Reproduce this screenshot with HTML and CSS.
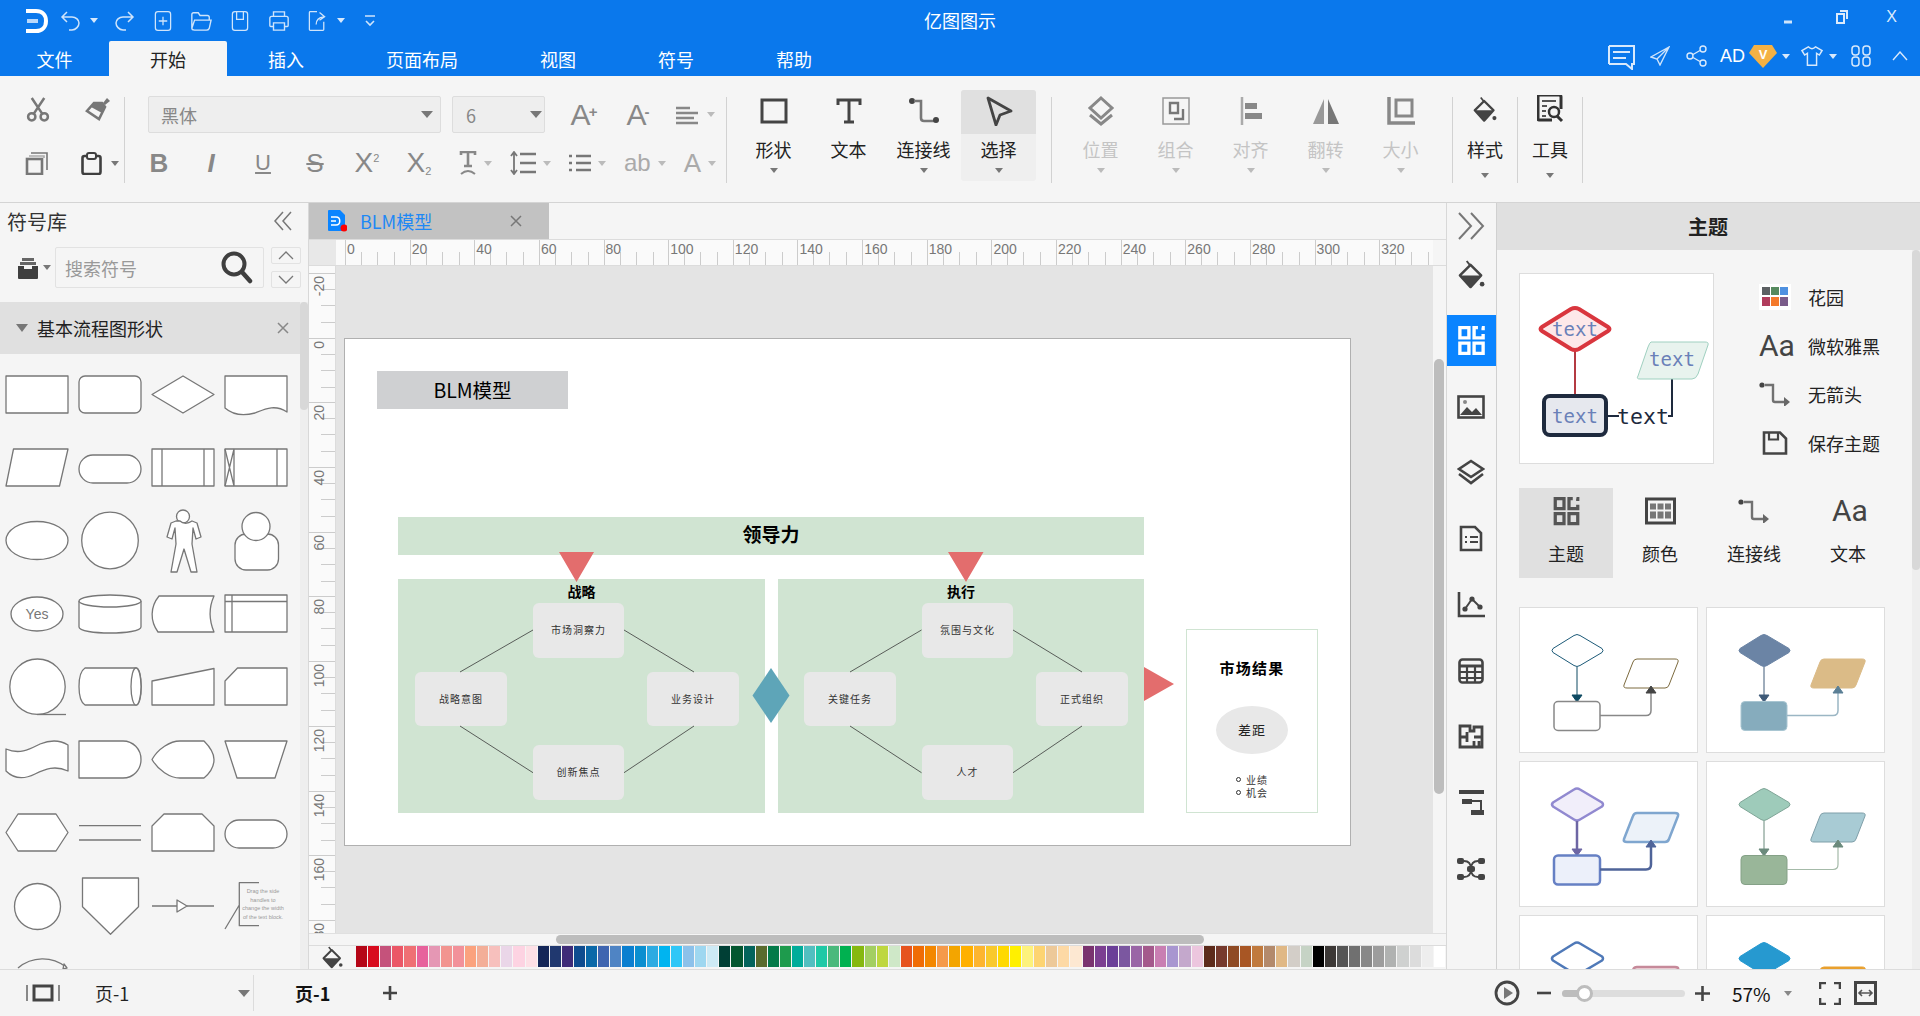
FILE: index.html
```html
<!DOCTYPE html>
<html lang="zh-CN">
<head>
	<meta charset="utf-8" />
	<title>亿图图示</title>
	<link rel="stylesheet" href="styles.css">
</head>
<body>
	<svg class="defs" width="0" height="0">
		<symbol id="i-theme" viewBox="0 0 24 24">
			<path d="M3 2h7v8H3zM3 14h7v8H3zM14 14h7v8h-7zM17 2h-3v8h7V7M20 2h1v2" fill="none" stroke="currentColor" stroke-width="2.6"/>
		</symbol>
		<symbol id="i-conn" viewBox="0 0 32 24">
			<circle cx="3" cy="3" r="2.6" fill="currentColor"/>
			<path d="M6 3h8v15q0 2 2 2h9" fill="none" stroke="currentColor" stroke-width="2.4" opacity=".75"/>
			<path d="M25 15l6 5-6 5z" fill="currentColor" opacity=".8"/>
		</symbol>
		<symbol id="i-bucket" viewBox="0 0 28 30">
			<path d="M9 1l4 5" stroke="currentColor" stroke-width="2" fill="none"/>
			<path d="M13 5l11 11-11 12L2 16z" fill="none" stroke="currentColor" stroke-width="2.6" stroke-linejoin="round"/>
			<path d="M2 16h22L13 28z" fill="currentColor"/>
			<circle cx="25" cy="25" r="2.4" fill="currentColor"/>
		</symbol>
		<symbol id="sample" viewBox="0 0 179 146">
			<path class="s-dia" d="M55 28.500q3-2 6 0l22 13q2 2 0 4L61 58.500q-3 2-6 0L34 45.500q-2-2 0-4z"/>
			<path class="s-line" d="M58 60v30"/>
			<path class="s-head" d="M53 88h10l-5 7z"/>
			<rect class="s-box" x="35" y="94.500" width="46" height="29" rx="4"/>
			<path class="s-para" d="M118 52h38q4 0 3 3l-9 23q-1 3-4 3h-38q-4 0-3-3l9-23q1-3 4-3z"/>
			<path class="s-conn" d="M81 108.500h46q5 0 5-5V85"/>
			<path class="s-chead" d="M127 86l5-7 5 7z"/>
		</symbol>
	</svg>

	<header class="titlebar">
		<div class="quick">
			<span class="qa-logo">
				<svg width="23" height="26" viewBox="0 0 23 26"><path d="M1 3h10c6 0 10 4 10 10s-4 10-10 10H1" fill="none" stroke="#fff" stroke-width="4"/><path d="M2 13h11" stroke="#b9d8fb" stroke-width="4"/></svg>
			</span>
			<span class="qa-undo">
				<svg class="qa-svg" viewBox="0 0 22 22"><path d="M7 2L2 7l5 5M2 7h10c4 0 7 3 7 6s-3 7-7 7H9" /></svg>
				<i class="caret caret-white"></i>
			</span>
			<span class="qa-btn"><svg class="qa-svg" viewBox="0 0 22 22"><path d="M15 2l5 5-5 5M20 7H10c-4 0-7 3-7 6s3 7 7 7h3"/></svg></span>
			<span class="qa-btn"><svg class="qa-svg" viewBox="0 0 22 26"><rect x="2" y="2" width="18" height="22" rx="3"/><path d="M11 8v10M6 13h10"/></svg></span>
			<span class="qa-btn"><svg class="qa-svg" viewBox="0 0 24 24"><path d="M2 20V5q0-2 2-2h5l2 3h8q2 0 2 2v3M2 20q0 2 3 2h13q2 0 3-2l2-9H5z"/></svg></span>
			<span class="qa-btn"><svg class="qa-svg" viewBox="0 0 22 26"><rect x="2" y="2" width="18" height="22" rx="3"/><path d="M7 2v9h8V2"/></svg></span>
			<span class="qa-btn"><svg class="qa-svg" viewBox="0 0 24 24"><path d="M6 7V2h12v5M6 18H3q-1 0-1-1V9q0-2 2-2h16q2 0 2 2v8q0 1-1 1h-3M6 14h12v8H6z"/></svg></span>
			<span class="qa-btn"><svg class="qa-svg" viewBox="0 0 22 26"><path d="M11 2H3q-1 0-1 1v20q0 1 1 1h15q1 0 1-1v-9M10 17q0-8 9-9M14 3l6 5-6 4"/></svg></span>
			<i class="caret caret-white"></i>
			<span class="qa-more"><svg width="12" height="14" viewBox="0 0 12 14"><path d="M1 2h10M2 7l4 4 4-4" fill="none" stroke="#cfe4fb" stroke-width="1.6"/></svg></span>
		</div>
		<div class="app-title">亿图图示</div>
		<div class="winctl">
			<svg class="win-min" width="10" height="8" viewBox="0 0 10 8"><path d="M1 5h8" stroke="#cfe4fb" stroke-width="3"/></svg>
			<svg class="win-max" width="12" height="14" viewBox="0 0 12 14"><path d="M4 1h7v8M1 4h7v9H1z" fill="none" stroke="#dcebfc" stroke-width="2"/></svg>
			<span class="win-close">X</span>
		</div>
	</header>

	<nav class="menubar">
		<a class="tab tab-first">文件</a>
		<a class="tab tab-on">开始</a>
		<a class="tab">插入</a>
		<a class="tab tab-wide">页面布局</a>
		<a class="tab">视图</a>
		<a class="tab">符号</a>
		<a class="tab">帮助</a>
		<div class="menu-right">
			<svg width="30" height="27" viewBox="0 0 30 27"><path d="M2 3h25v18h-2v5l-6-5H2M2 3v18M6 9h17M6 15h13" fill="none" stroke="#d8e9fc" stroke-width="2"/></svg>
			<svg class="mr-send" width="20" height="20" viewBox="0 0 20 20"><path d="M19 1L1 11l6 2 3 6zM19 1L7 13" fill="none" stroke="#cfe4fb" stroke-width="1.4"/></svg>
			<svg class="mr-share" width="21" height="22" viewBox="0 0 21 22"><circle cx="4" cy="11" r="3"/><circle cx="17" cy="4" r="3"/><circle cx="17" cy="18" r="3"/><path d="M7 9.500l7-4M7 12.500l7 4"/></svg>
			<span class="mr-ad">AD</span>
			<svg class="mr-vip" width="28" height="24" viewBox="0 0 28 24"><path d="M5 1h18l5 8-14 15L0 9z" fill="#f4b144"/><text x="14" y="15" text-anchor="middle" class="vip-v">V</text></svg>
			<i class="caret caret-white mr-caret"></i>
			<svg class="mr-shirt" width="22" height="22" viewBox="0 0 24 22"><path d="M8 1L1 5l3 5 3-2v13h10V8l3 2 3-5-7-4q-4 4-8 0z" fill="none" stroke="#d8e9fc" stroke-width="1.6"/></svg>
			<i class="caret caret-white mr-caret2"></i>
			<svg class="mr-grid" width="20" height="22" viewBox="0 0 20 22"><g fill="none" stroke="#d8e9fc" stroke-width="1.5"><rect x="1" y="1" width="7" height="9" rx="3"/><rect x="12" y="1" width="7" height="9" rx="3"/><rect x="1" y="12" width="7" height="9" rx="3"/><rect x="12" y="12" width="7" height="9" rx="3"/></g></svg>
			<svg class="mr-up" width="16" height="10" viewBox="0 0 16 10"><path d="M1 9l7-8 7 8" fill="none" stroke="#d8e9fc" stroke-width="1.4"/></svg>
		</div>
	</nav>

	<section class="ribbon">
		<div class="rb-clip">
			<span class="rb-icon"><svg width="26" height="25" viewBox="0 0 24 24"><g fill="none" stroke="#777" stroke-width="2.4"><circle cx="6" cy="19" r="3.500"/><circle cx="18" cy="19" r="3.500"/><path d="M8 16L18 1M16 16L6 1"/></g></svg></span>
			<span class="rb-icon rb-brush"><svg width="26" height="24" viewBox="0 0 26 24"><path d="M18 6l4-5 3 3-5 4z" fill="#777"/><path d="M9 6l8 0 3 4-6 12-12-8z" fill="none" stroke="#777" stroke-width="2.600"/><path d="M9 6l8 0 3 4-3 6-11-6z" fill="#777"/></svg></span>
			<span class="rb-icon"><svg width="23" height="23" viewBox="0 0 23 23"><path d="M6 1h16v17" fill="none" stroke="#777" stroke-width="1.6"/><path d="M4 4h15v2" fill="none" stroke="#aaa" stroke-width="1.600"/><rect x="2" y="7" width="15" height="15" fill="none" stroke="#777" stroke-width="2.600"/></svg></span>
			<span class="rb-icon rb-paste"><svg width="21" height="23" viewBox="0 0 21 23"><rect x="1.500" y="4" width="18" height="18" rx="2" fill="none" stroke="#3f3f3f" stroke-width="2.600"/><rect x="6" y="1" width="9" height="6" rx="2" fill="#f5f5f5" stroke="#3f3f3f" stroke-width="2"/></svg><i class="caret"></i></span>
		</div>
		<div class="rb-sep"></div>

		<div class="rb-font">
			<div class="font-row">
				<div class="sel sel-font">黑体<i class="caret caret-big"></i></div>
				<div class="sel sel-size">6<i class="caret caret-big"></i></div>
				<span class="fmt fmt-grow">A<sup>+</sup></span>
				<span class="fmt fmt-shrink">A<sup>-</sup></span>
				<svg class="fmt-align" width="22" height="20" viewBox="0 0 22 20"><path d="M0 3h14M0 8h22M0 13h18M0 18h22" stroke="#888" stroke-width="2.600"/></svg>
				<i class="caret caret-pale fmt-align-caret"></i>
			</div>
			<div class="font-row font-row2">
				<span class="fmt fmt-b">B</span>
				<span class="fmt fmt-i">I</span>
				<span class="fmt fmt-u">U</span>
				<span class="fmt fmt-s">S</span>
				<span class="fmt fmt-x">X<sup>2</sup></span>
				<span class="fmt fmt-x">X<sub>2</sub></span>
				<div class="fmt-drops">
					<span class="drop"><svg width="18" height="24" viewBox="0 0 18 24"><path d="M2 4V1h14v3M9 1v14M5 15h8" fill="none" stroke="#888" stroke-width="2.600"/><path d="M2 23q7-6 14 0" fill="none" stroke="#888" stroke-width="2"/></svg><i class="caret caret-pale"></i></span>
					<span class="drop"><svg width="26" height="24" viewBox="0 0 26 24"><path d="M10 3h16M10 12h16M10 21h16" stroke="#777" stroke-width="2.600"/><path d="M4 2v20M1 5l3-4 3 4M1 19l3 4 3-4" fill="none" stroke="#777" stroke-width="1.800"/></svg><i class="caret caret-pale"></i></span>
					<span class="drop"><svg width="22" height="20" viewBox="0 0 22 20"><path d="M7 3h15M7 10h15M7 17h15" stroke="#777" stroke-width="2.600"/><path d="M0 3h3M0 10h3M0 17h3" stroke="#777" stroke-width="2.600"/></svg><i class="caret caret-pale"></i></span>
					<span class="drop"><span class="fmt-ab">ab</span><i class="caret caret-pale"></i></span>
					<span class="drop"><span class="fmt-a">A</span><i class="caret caret-pale"></i></span>
				</div>
			</div>
		</div>
		<div class="rb-sep"></div>

		<div class="rb-bigs rb-draw">
			<div class="big">
				<div class="big-ic"><svg width="28" height="26" viewBox="0 0 28 26"><rect x="2" y="2" width="24" height="22" fill="none" stroke="#444" stroke-width="3"/></svg></div>
				<div class="big-lb">形状</div><i class="caret"></i>
			</div>
			<div class="big">
				<div class="big-ic"><svg width="26" height="26" viewBox="0 0 26 26"><path d="M2 7V2h22v5M13 2v22M8 24h10" fill="none" stroke="#444" stroke-width="3"/></svg></div>
				<div class="big-lb">文本</div>
			</div>
			<div class="big">
				<div class="big-ic"><svg width="30" height="26" viewBox="0 0 30 26"><circle cx="3" cy="3" r="3" fill="#444"/><path d="M5 3h7v17q0 3 3 3h11" fill="none" stroke="#777" stroke-width="2.600"/><circle cx="27" cy="22" r="3" fill="#444"/></svg></div>
				<div class="big-lb">连接线</div><i class="caret"></i>
			</div>
			<div class="big big-on">
				<div class="big-ic"><svg width="28" height="30" viewBox="0 0 28 30"><path d="M3 2l23 13-11 4-4 10z" fill="none" stroke="#444" stroke-width="2.800" stroke-linejoin="round"/></svg></div>
				<div class="big-lb">选择</div><i class="caret"></i>
			</div>
		</div>
		<div class="rb-sep"></div>

		<div class="rb-bigs rb-arrange">
			<div class="big big-off">
				<div class="big-ic"><svg width="30" height="30" viewBox="0 0 30 30"><path d="M15 2l11 10-11 10L4 12z" fill="none" stroke="#888" stroke-width="3"/><path d="M4 19l11 9 11-9" fill="none" stroke="#888" stroke-width="3"/></svg></div>
				<div class="big-lb">位置</div><i class="caret caret-pale"></i>
			</div>
			<div class="big big-off">
				<div class="big-ic"><svg width="30" height="30" viewBox="0 0 30 30"><rect x="2" y="2" width="26" height="26" fill="none" stroke="#999" stroke-width="1.500"/><path d="M9 7h8v10H9zM22 13v10H13" fill="none" stroke="#777" stroke-width="2.400"/></svg></div>
				<div class="big-lb">组合</div><i class="caret caret-pale"></i>
			</div>
			<div class="big big-off">
				<div class="big-ic"><svg width="24" height="28" viewBox="0 0 24 28"><path d="M3 0v28" stroke="#aaa" stroke-width="2.500"/><path d="M6 6h12v6H6zM6 16h17v6H6z" fill="#888"/></svg></div>
				<div class="big-lb">对齐</div><i class="caret caret-pale"></i>
			</div>
			<div class="big big-off">
				<div class="big-ic"><svg width="30" height="26" viewBox="0 0 30 26"><path d="M13 1v25H2z" fill="#999"/><path d="M17 1v25h11z" fill="#777"/></svg></div>
				<div class="big-lb">翻转</div><i class="caret caret-pale"></i>
			</div>
			<div class="big big-off">
				<div class="big-ic"><svg width="28" height="28" viewBox="0 0 28 28"><path d="M2 0v26h26" fill="none" stroke="#888" stroke-width="3.500"/><rect x="9" y="3" width="16" height="16" fill="none" stroke="#888" stroke-width="3"/></svg></div>
				<div class="big-lb">大小</div><i class="caret caret-pale"></i>
			</div>
		</div>
		<div class="rb-sep"></div>

		<div class="big big-narrow">
			<div class="big-ic big-ic-up"><svg class="ic-dark" width="24" height="27" viewBox="0 0 28 30"><use href="#i-bucket"/></svg></div>
			<div class="big-lb">样式</div><i class="caret"></i>
		</div>
		<div class="rb-sep"></div>
		<div class="big big-narrow">
			<div class="big-ic big-ic-up"><svg width="27" height="28" viewBox="0 0 27 28"><path d="M2 0h20q2 0 2 2v12M2 0q-1 0-1 2v22q0 1 1 1h13" fill="none" stroke="#333" stroke-width="3"/><path d="M5 6h14M5 11h5M5 16h4M5 21h4" stroke="#555" stroke-width="2"/><circle cx="17" cy="17" r="5" fill="none" stroke="#333" stroke-width="2.500"/><path d="M20 21l5 5" stroke="#333" stroke-width="3"/></svg></div>
			<div class="big-lb">工具</div><i class="caret"></i>
		</div>
		<div class="rb-sep"></div>
	</section>

	<main class="workspace">
		<aside class="lib">
			<div class="lib-head">
				<span>符号库</span>
				<svg width="20" height="20" viewBox="0 0 20 20"><path d="M10 1L2 10l8 9M18 1l-8 9 8 9" fill="none" stroke="#777" stroke-width="1.500"/></svg>
			</div>
			<div class="lib-search">
				<svg width="22" height="22" viewBox="0 0 22 22"><path d="M5 1h12v3H5zM3 5h16v3H3z" fill="#666"/><path d="M1 9h6v3h8V9h6v12q0 1-1 1H2q-1 0-1-1z" fill="#3f3f3f"/></svg>
				<i class="caret"></i>
				<div class="search-box">
					<span>搜索符号</span>
					<svg width="32" height="33" viewBox="0 0 32 33"><circle cx="13" cy="13" r="10.500" fill="none" stroke="#3f3f3f" stroke-width="4"/><path d="M21 21l8 9" stroke="#3f3f3f" stroke-width="4.500" stroke-linecap="round"/></svg>
				</div>
				<div class="updown">
					<span><svg width="16" height="9" viewBox="0 0 16 9"><path d="M1 8l7-7 7 7" fill="none" stroke="#777" stroke-width="1.300"/></svg></span>
					<span><svg width="16" height="9" viewBox="0 0 16 9"><path d="M1 1l7 7 7-7" fill="none" stroke="#777" stroke-width="1.300"/></svg></span>
				</div>
			</div>
			<div class="lib-body">
				<div class="lib-list">
					<div class="lib-section">
						<i class="caret caret-section"></i>
						<span>基本流程图形状</span>
						<svg width="12" height="12" viewBox="0 0 12 12"><path d="M1 1l10 10M11 1L1 11" stroke="#888" stroke-width="1.500"/></svg>
					</div>
					<div class="shapes">
						<svg viewBox="0 0 73 73"><rect x="6" y="18" width="62" height="37"/></svg>
						<svg viewBox="0 0 73 73"><rect x="6" y="18" width="62" height="37" rx="6"/></svg>
						<svg viewBox="0 0 73 73"><path d="M6 36.500L37 18l31 18.500L37 55z"/></svg>
						<svg viewBox="0 0 73 73"><path d="M6 18h62v36c-12-8-22-3-32 1-11 3-22 2-30-5z"/></svg>

						<svg viewBox="0 0 73 73"><path d="M6 55l7.500-37H68l-8.500 37z"/></svg>
						<svg viewBox="0 0 73 73"><rect x="6" y="24" width="62" height="28" rx="14"/></svg>
						<svg viewBox="0 0 73 73"><rect x="6" y="18" width="62" height="37"/><path d="M16 18v37M58 18v37"/></svg>
						<svg viewBox="0 0 73 73"><rect x="6" y="18" width="62" height="37"/><path d="M15 18v37M58 18v37M6 18l9 37M15 18L6 55"/></svg>

						<svg viewBox="0 0 73 73"><ellipse cx="37" cy="36.500" rx="31" ry="19"/></svg>
						<svg viewBox="0 0 73 73"><circle cx="37" cy="36.500" r="28.300"/></svg>
						<svg viewBox="0 0 73 73"><circle cx="37" cy="12.500" r="6.500"/><path d="M30 17l-5 2-4 14 5 2 3-11 1 16-5 28h6l7-23 7 23h6l-5-28 1-16 3 11 5-2-4-14-5-2c-4 3-9 3-12 0z"/></svg>
						<svg viewBox="0 0 73 73"><rect x="16" y="30" width="43.500" height="36" rx="11"/><circle cx="37" cy="22.500" r="14"/></svg>

						<svg viewBox="0 0 73 73"><ellipse cx="37" cy="37" rx="26" ry="17"/><text x="37" y="42" text-anchor="middle" class="shape-yes">Yes</text></svg>
						<svg viewBox="0 0 73 73"><path d="M6 24v26c0 8 62 8 62 0V24"/><ellipse cx="37" cy="24" rx="31" ry="6"/></svg>
						<svg viewBox="0 0 73 73"><path d="M13 19h55c-5 11-5 24 0 36H12C4 44 4 30 13 19z"/></svg>
						<svg viewBox="0 0 73 73"><rect x="6" y="18" width="62" height="37"/><path d="M13 18v37M6 24.500h62"/></svg>

						<svg viewBox="0 0 73 73"><circle cx="37.500" cy="36.700" r="27.700"/><path d="M37 64.500h29"/></svg>
						<svg viewBox="0 0 73 73"><path d="M12 18h51c7 0 7 37 0 37H12C4 50 4 23 12 18z"/><ellipse cx="63" cy="36.500" rx="5" ry="18.500"/></svg>
						<svg viewBox="0 0 73 73"><path d="M6 31l62-12.500V55H6z"/></svg>
						<svg viewBox="0 0 73 73"><path d="M6 31l12.500-13H68v37H6z"/></svg>

						<svg viewBox="0 0 73 73"><path d="M6 26c14 6 24 0 34-5 10-4 20-4 28 1v26c-13-6-23-2-33 3-10 5-20 6-29-3z"/></svg>
						<svg viewBox="0 0 73 73"><path d="M6 18h44c10 0 18 8 18 18.500S60 55 50 55H6z"/></svg>
						<svg viewBox="0 0 73 73"><path d="M6 36.500C12 26 24 18 34 18h24c6 6 10 12 10 18.500S64 50 58 55H34C24 55 12 47 6 36.500z"/></svg>
						<svg viewBox="0 0 73 73"><path d="M6 18h62L56 55H18z"/></svg>

						<svg viewBox="0 0 73 73"><path d="M6 36.500L18 18h38l12 18.500L56 55H18z"/></svg>
						<svg viewBox="0 0 73 73"><path d="M6 29.700h62M6 44h62"/></svg>
						<svg viewBox="0 0 73 73"><path d="M6 55V30l12-12h38l12 12v25z"/></svg>
						<svg viewBox="0 0 73 73"><rect x="6" y="24" width="62" height="28" rx="14"/></svg>

						<svg viewBox="0 0 73 73"><circle cx="37.500" cy="37.500" r="23"/></svg>
						<svg viewBox="0 0 73 73"><path d="M9.500 9h56v28.700l-28 27.600-28-27.600z"/></svg>
						<svg viewBox="0 0 73 73"><path d="M6 37h25M41 37h27"/><path d="M31 31l10 6-10 6z"/></svg>
						<svg viewBox="0 0 73 73"><path class="no-fill" d="M40 13.700H20.300v43H40M20.300 36L6 60"/><g class="shape-note" text-anchor="middle"><text x="44" y="24">Drag the side</text><text x="44" y="33">handles to</text><text x="44" y="41">change the width</text><text x="44" y="49.500">of the text block.</text></g></svg>

						<svg viewBox="0 0 73 73"><path class="no-fill" d="M18 26c14-12 34-12 48-1"/><path d="M64 22l3 4-4 1z"/></svg>
					</div>
				</div>
				<div class="vbar"><div class="vbar-thumb lib-thumb"></div></div>
			</div>
		</aside>

		<section class="editor">
			<div class="doc-tabs">
				<div class="doc-tab">
					<svg width="20" height="22" viewBox="0 0 20 22"><path d="M2 0h11l5 5v15q0 1-1 1H2q-1 0-1-1V1q0-1 1-1z" fill="#0a84ff"/><path d="M4 7h5c5 0 5 8 0 8H4M4 11h5" fill="none" stroke="#fff" stroke-width="1.500"/><circle cx="17" cy="18" r="3.500" fill="#f00"/></svg>
					<span>BLM模型</span>
					<svg class="doc-x" width="12" height="12" viewBox="0 0 12 12"><path d="M1 1l10 10M11 1L1 11" stroke="#777" stroke-width="1.500"/></svg>
				</div>
			</div>
			<div class="ruler-row">
				<div class="ruler-corner"></div>
				<div class="ruler-top">
					<div class="rt-cell">0</div><div class="rt-cell">20</div><div class="rt-cell">40</div><div class="rt-cell">60</div><div class="rt-cell">80</div><div class="rt-cell">100</div><div class="rt-cell">120</div><div class="rt-cell">140</div><div class="rt-cell">160</div><div class="rt-cell">180</div><div class="rt-cell">200</div><div class="rt-cell">220</div><div class="rt-cell">240</div><div class="rt-cell">260</div><div class="rt-cell">280</div><div class="rt-cell">300</div><div class="rt-cell">320</div>
				</div>
			</div>
			<div class="view">
				<div class="ruler-left">
					<div class="rl-cell"><span>-20</span></div><div class="rl-cell"><span>0</span></div><div class="rl-cell"><span>20</span></div><div class="rl-cell"><span>40</span></div><div class="rl-cell"><span>60</span></div><div class="rl-cell"><span>80</span></div><div class="rl-cell"><span>100</span></div><div class="rl-cell"><span>120</span></div><div class="rl-cell"><span>140</span></div><div class="rl-cell"><span>160</span></div><div class="rl-cell"><span>180</span></div>
				</div>
				<div class="stage">
					<div class="page">
						<div class="d-title">BLM模型</div>
						<div class="d-band">领导力</div>
						<div class="d-box d-box-l">
							<div class="d-box-title">战略</div>
							<div class="cluster">
								<div class="node n-top">市场洞察力</div>
								<div class="node n-left">战略意图</div>
								<div class="node n-right">业务设计</div>
								<div class="node n-bottom">创新焦点</div>
							</div>
						</div>
						<div class="d-box d-box-r">
							<div class="d-box-title">执行</div>
							<div class="cluster">
								<div class="node n-top">氛围与文化</div>
								<div class="node n-left">关键任务</div>
								<div class="node n-right">正式组织</div>
								<div class="node n-bottom">人才</div>
							</div>
						</div>
						<svg class="d-links" viewBox="0 0 1004 505">
							<path class="d-line" d="M188 291L115 333M279 291L349 333M115 387L188 433.700M349 387L279 433.700M576.500 291L505 333M668 291L737 333M505 387L576.500 433.700M737 387L668 433.700"/>
							<path fill="#e36d6d" d="M214 213h35l-17.500 30zM603 213h35.500L621 243zM799 328l30 17-30 17z"/>
							<path fill="#5ea5b8" d="M426 329l18.500 27.500L426 384l-18.500-27.500z"/>
						</svg>
						<div class="d-result">
							<div class="d-result-title">市场结果</div>
							<div class="d-gap">差距</div>
							<ul class="d-list">
								<li>业绩</li>
								<li>机会</li>
							</ul>
						</div>
					</div>
				</div>
				<div class="vscroll"><div class="vscroll-thumb"></div></div>
			</div>
			<div class="hscroll"><div class="hscroll-thumb"></div></div>
			<div class="colorbar">
				<div class="colorbar-ic"><svg class="ic-dark" width="21" height="23" viewBox="0 0 28 30"><use href="#i-bucket"/></svg></div>
				<div class="swatches">
					<i style="background:#b50617"></i><i style="background:#d80b1e"></i><i style="background:#c5527b"></i><i style="background:#eb5767"></i><i style="background:#ef7074"></i><i style="background:#e7629c"></i><i style="background:#e597b4"></i><i style="background:#f29490"></i><i style="background:#f2919a"></i><i style="background:#fba27e"></i><i style="background:#f3ae98"></i><i style="background:#f7c0bd"></i><i style="background:#ead6e8"></i><i style="background:#fdd3e2"></i><i style="background:#fde0e6"></i>
					<i style="background:#142658"></i><i style="background:#20386f"></i><i style="background:#3f2c78"></i><i style="background:#0f4c8f"></i><i style="background:#0a68a8"></i><i style="background:#3f65b0"></i><i style="background:#4f84c4"></i><i style="background:#0a7fd0"></i><i style="background:#0a8fd0"></i><i style="background:#2dabe2"></i><i style="background:#00b4f0"></i><i style="background:#30c7f7"></i><i style="background:#8cc1ea"></i><i style="background:#9ed7f0"></i><i style="background:#cdeaf5"></i>
					<i style="background:#003f35"></i><i style="background:#03562f"></i><i style="background:#03645c"></i><i style="background:#596b2d"></i><i style="background:#037a49"></i><i style="background:#1e9b4d"></i><i style="background:#00ac9a"></i><i style="background:#52bfc0"></i><i style="background:#1fc9a6"></i><i style="background:#4ab97c"></i><i style="background:#00b150"></i><i style="background:#86b80f"></i><i style="background:#a3cf62"></i><i style="background:#bed73f"></i><i style="background:#cfe8c8"></i>
					<i style="background:#e6531f"></i><i style="background:#f06c05"></i><i style="background:#f38700"></i><i style="background:#f59a4a"></i><i style="background:#f3a500"></i><i style="background:#ffb000"></i><i style="background:#fdb52f"></i><i style="background:#f9c92c"></i><i style="background:#ffd900"></i><i style="background:#fff000"></i><i style="background:#fdf27c"></i><i style="background:#fdd472"></i><i style="background:#edc999"></i><i style="background:#fdd9a5"></i><i style="background:#fde8d2"></i>
					<i style="background:#7a336f"></i><i style="background:#7c3f91"></i><i style="background:#6b3f98"></i><i style="background:#7b57a0"></i><i style="background:#9a66a6"></i><i style="background:#a45a8c"></i><i style="background:#c97fb2"></i><i style="background:#a896d0"></i><i style="background:#c4a8cc"></i><i style="background:#ecc6de"></i>
					<i style="background:#5d2b1b"></i><i style="background:#763a2d"></i><i style="background:#8f4a24"></i><i style="background:#a85624"></i><i style="background:#c07a3e"></i><i style="background:#b38a6c"></i><i style="background:#e0b885"></i><i style="background:#d3cec8"></i><i style="background:#c6d3c5"></i>
					<i style="background:#000"></i><i style="background:#3c3836"></i><i style="background:#555"></i><i style="background:#707070"></i><i style="background:#888"></i><i style="background:#9d9d9d"></i><i style="background:#b0b2b1"></i><i style="background:#cfd1d0"></i><i style="background:#dcdcdc"></i><i style="background:#eee"></i><i style="background:#fff"></i>
				</div>
			</div>
		</section>

		<nav class="strip">
			<div class="strip-top"><svg width="28" height="28" viewBox="0 0 28 28"><path d="M2 1l12 13L2 27M14 1l12 13-12 13" fill="none" stroke="#777" stroke-width="2"/></svg></div>
			<div class="strip-list">
				<span><svg class="ic-dark" width="27" height="29" viewBox="0 0 28 30"><use href="#i-bucket"/></svg></span>
				<span class="strip-on"><svg width="31" height="31" viewBox="0 0 24 24"><use href="#i-theme"/></svg></span>
				<span><svg width="28" height="24" viewBox="0 0 28 24"><rect x="1.500" y="1.500" width="25" height="21" fill="none" stroke="#444" stroke-width="2.600"/><path d="M3 20l7-8 5 5 4-4 6 7z" fill="#444"/><circle cx="8" cy="7" r="2" fill="#888"/></svg></span>
				<span><svg width="28" height="27" viewBox="0 0 28 27"><path d="M14 2l12 8-12 8-12-8z" fill="none" stroke="#444" stroke-width="2.600"/><path d="M2 15l12 9 12-9" fill="none" stroke="#444" stroke-width="2.600"/></svg></span>
				<span><svg width="24" height="27" viewBox="0 0 24 27"><path d="M2 2h14l6 6v17H2z" fill="none" stroke="#444" stroke-width="2.600"/><path d="M6 12h2M11 12h8M6 17h2M11 17h8" stroke="#444" stroke-width="2.200"/></svg></span>
				<span><svg width="28" height="26" viewBox="0 0 28 26"><path d="M2 0v24h26" fill="none" stroke="#444" stroke-width="2.600"/><path d="M8 17l7-10 8 8" fill="none" stroke="#444" stroke-width="2"/><circle cx="8" cy="17" r="2.600" fill="#444"/><circle cx="15" cy="7" r="2.600" fill="#444"/><circle cx="23" cy="15" r="2.600" fill="#444"/></svg></span>
				<span><svg width="26" height="26" viewBox="0 0 26 26"><rect x="1.500" y="1.500" width="23" height="23" rx="3" fill="none" stroke="#444" stroke-width="2.600"/><path d="M1 8h24" stroke="#444" stroke-width="3"/><path d="M1 14h24M1 20h24M9 8v17M17 8v17" stroke="#444" stroke-width="2.200"/></svg></span>
				<span><svg width="26" height="25" viewBox="0 0 26 25"><path d="M2 2h10v5h4V3h8v20H2zM2 13h7v-5M9 13v5M16 23v-6M21 23v-6M16 13h8" fill="none" stroke="#444" stroke-width="2.800"/></svg></span>
				<span><svg width="27" height="25" viewBox="0 0 27 25"><path d="M1 0h25v4H1z" fill="#444"/><path d="M4 9h10v5H4zM13 20h13v5H13z" fill="#444"/><path d="M14 11h9v10" fill="none" stroke="#444" stroke-width="2"/></svg></span>
				<span><svg width="28" height="24" viewBox="0 0 28 24"><g fill="#444"><rect x="0" y="1" width="7" height="6" rx="2"/><rect x="21" y="1" width="7" height="6" rx="2"/><rect x="0" y="17" width="7" height="6" rx="2"/><rect x="21" y="17" width="7" height="6" rx="2"/><rect x="10" y="9" width="8" height="6" rx="2"/></g><path d="M7 4q7 0 7 8t7 8M21 4q-7 0-7 8t-7 8" fill="none" stroke="#444" stroke-width="1.800"/></svg></span>
			</div>
		</nav>

		<aside class="panel">
			<div class="panel-head">主题</div>
			<div class="panel-body">
				<div class="panel-main">
					<div class="theme-top">
						<div class="preview">
							<svg width="193" height="189" viewBox="0 0 193 189">
								<path d="M55 77v45" stroke="#b43a42" stroke-width="2"/>
								<path d="M51 35q4-2 8 0l29 18q3 2 0 4L59 75q-4 2-8 0L22 57q-3-2 0-4z" fill="#fde8e9" stroke="#d9363e" stroke-width="4"/>
								<path d="M87 142h12M152 105v37h-4" fill="none" stroke="#1e2a3e" stroke-width="2"/>
								<rect x="24" y="122" width="62" height="39" rx="6" fill="#e6e8ee" stroke="#1e2a3e" stroke-width="4"/>
								<path d="M131 68h54q4 0 3 3l-10 29q-2 5-6 5h-52q-4 0-2-3l10-29q2-5 3-5z" fill="#e8f3ee" stroke="#9fd0c0"/>
								<g class="pv-text" text-anchor="middle">
									<text x="55" y="62">text</text>
									<text x="55" y="149">text</text>
									<text x="152" y="92">text</text>
								</g>
								<text class="pv-text-big" x="123" y="150" text-anchor="middle">text</text>
							</svg>
						</div>
						<ul class="opts">
							<li>
								<svg width="32" height="26" viewBox="0 0 32 26"><rect width="32" height="26" fill="#fff"/><path fill="#5c6063" d="M3 3h8v8H3z"/><path fill="#568a5e" d="M12 3h8v8h-8z"/><path fill="#4f91e0" d="M21 3h8v8h-8z"/><path fill="#b03c5c" d="M3 13h8v9H3z"/><path fill="#f47a2c" d="M12 13h8v9h-8z"/><path fill="#7a5c8a" d="M21 13h8v9h-8z"/></svg>
								<span>花园</span>
							</li>
							<li><b class="aa">Aa</b><span>微软雅黑</span></li>
							<li><svg class="ic-dark" width="32" height="24" viewBox="0 0 32 24"><use href="#i-conn"/></svg><span>无箭头</span></li>
							<li><svg width="32" height="24" viewBox="0 0 32 24"><path d="M5 1.500h16l6 6v15H5z" fill="none" stroke="#444" stroke-width="2.600"/><path d="M10 1.500v7h9v-7" fill="none" stroke="#444" stroke-width="2.200"/></svg><span>保存主题</span></li>
						</ul>
					</div>
					<div class="subtabs">
						<div class="subtab subtab-on"><svg class="ic-grey" width="31" height="31" viewBox="0 0 24 24"><use href="#i-theme"/></svg><span>主题</span></div>
						<div class="subtab"><svg width="31" height="27" viewBox="0 0 31 27"><rect x="1.500" y="1.500" width="28" height="24" fill="none" stroke="#444" stroke-width="3"/><path d="M5 6h6v6H5zM12.500 6h6v6h-6zM20 6h6v6h-6zM5 14h6v7H5zM12.500 14h6v7h-6zM20 14h6v7h-6z" fill="#777"/></svg><span>颜色</span></div>
						<div class="subtab"><svg class="ic-dark" width="32" height="25" viewBox="0 0 32 24"><use href="#i-conn"/></svg><span>连接线</span></div>
						<div class="subtab"><b class="aa">Aa</b><span>文本</span></div>
					</div>
					<div class="cards">
						<div class="card th-1"><svg viewBox="0 0 179 146"><use href="#sample"/></svg></div>
						<div class="card th-2"><svg viewBox="0 0 179 146"><use href="#sample"/></svg></div>
						<div class="card th-3"><svg viewBox="0 0 179 146"><use href="#sample"/></svg></div>
						<div class="card th-4"><svg viewBox="0 0 179 146"><use href="#sample"/></svg></div>
						<div class="card th-5"><svg viewBox="0 0 179 146"><use href="#sample"/></svg></div>
						<div class="card th-6"><svg viewBox="0 0 179 146"><use href="#sample"/></svg></div>
					</div>
				</div>
				<div class="vbar"><div class="vbar-thumb panel-thumb"></div></div>
			</div>
		</aside>
	</main>

	<footer class="statusbar">
		<div class="st-pages">
			<svg width="34" height="18" viewBox="0 0 34 18"><path d="M1 1v16M33 1v16" stroke="#888" stroke-width="2"/><rect x="8" y="2" width="18" height="14" fill="none" stroke="#444" stroke-width="3"/></svg>
			<span class="st-page">页-1</span>
			<i class="caret caret-big"></i>
		</div>
		<span class="st-active">页-1</span>
		<svg class="st-add" width="16" height="16" viewBox="0 0 16 16"><path d="M8 1v14M1 8h14" stroke="#444" stroke-width="2.600"/></svg>
		<div class="st-right">
			<svg width="26" height="26" viewBox="0 0 26 26"><circle cx="13" cy="13" r="11" fill="none" stroke="#444" stroke-width="2.800"/><path d="M10 7l9 6-9 6z" fill="#777"/></svg>
			<svg class="st-minus" width="14" height="4" viewBox="0 0 14 4"><path d="M0 2h14" stroke="#444" stroke-width="2.600"/></svg>
			<div class="slider"><div class="slider-fill"></div><div class="slider-thumb"></div></div>
			<svg class="st-plus" width="15" height="15" viewBox="0 0 15 15"><path d="M7.500 0v15M0 7.500h15" stroke="#444" stroke-width="2.600"/></svg>
			<span class="st-zoom">57%</span>
			<i class="caret caret-zoom"></i>
			<svg class="st-full" width="22" height="23" viewBox="0 0 22 23"><path d="M1 7V1h6M15 1h6v6M21 16v6h-6M7 22H1v-6" fill="none" stroke="#444" stroke-width="2.600"/></svg>
			<svg class="st-fit" width="23" height="24" viewBox="0 0 23 24"><rect x="1.500" y="1.500" width="20" height="21" fill="none" stroke="#444" stroke-width="3"/><path d="M5 12h13M8 9l-3 3 3 3M15 9l3 3-3 3" fill="none" stroke="#555" stroke-width="1.600"/></svg>
		</div>
	</footer>
</body>
</html>
```

FILE: styles.css
```css
html, body {
	margin: 0;
	padding: 0;
}

body {
	width: 1920px;
	height: 1016px;
	overflow: hidden;
	display: flex;
	flex-direction: column;
	font-family: 'Noto Sans CJK SC', 'Noto Sans', sans-serif;
	font-size: 18px;
	color: #222;
	background: #f5f5f5;
}

.defs {
	position: absolute;
}

svg {
	flex: none;
	display: block;
}

i {
	font-style: normal;
}

.caret {
	display: block;
	flex: none;
	width: 0;
	height: 0;
	border-left: 4px solid transparent;
	border-right: 4px solid transparent;
	border-top: 5px solid #777;
}

.caret-white {
	border-top-color: #d8e9fc;
}

.caret-big {
	border-left-width: 6px;
	border-right-width: 6px;
	border-top: 7px solid #777;
	margin-left: auto;
}

.caret-pale {
	border-top-color: #bbb;
}

.ic-dark {
	color: #444;
}

.ic-grey {
	color: #555;
}

/* title bar */

.titlebar {
	height: 41px;
	flex: none;
	display: grid;
	grid-template-columns: 1fr auto 1fr;
	align-items: center;
	background: #0a78ec;
	color: #fff;
}

.quick {
	display: flex;
	align-items: center;
}

.qa-logo {
	width: 52px;
	padding-left: 25px;
	box-sizing: border-box;
}

.qa-undo {
	width: 53px;
	display: flex;
	align-items: center;
	gap: 8px;
	padding-left: 8px;
	box-sizing: border-box;
}

.qa-btn {
	width: 38.6px;
	display: flex;
	justify-content: center;
}

.qa-svg {
	width: 22px;
	height: 22px;
	fill: none;
	stroke: #cfe4fb;
	stroke-width: 1.5;
}

.qa-more {
	margin-left: 19px;
}

.app-title {
	line-height: 41px;
}

.winctl {
	display: flex;
	align-items: center;
	justify-content: flex-end;
	padding-right: 23px;
}

.win-max {
	margin-left: 43px;
	margin-bottom: 8px;
}

.win-close {
	margin-left: 38px;
	margin-bottom: 8px;
	font-size: 16px;
	color: #dcebfc;
	font-family: 'Liberation Sans', sans-serif;
}

/* menu tabs */

.menubar {
	height: 35px;
	flex: none;
	display: flex;
	background: #0a78ec;
}

.tab {
	width: 118px;
	text-align: center;
	line-height: 36px;
	color: #fff;
}

.tab-first {
	width: 109px;
}

.tab-wide {
	width: 154px;
}

.tab-on {
	background: #f5f5f5;
	color: #222;
	border-radius: 2px 2px 0 0;
}

.menu-right {
	margin-left: auto;
	width: 313px;
	display: flex;
	align-items: center;
	padding-bottom: 5px;
	box-sizing: border-box;
}

.mr-send {
	margin-left: 13px;
}

.mr-share {
	margin-left: 16px;
	fill: none;
	stroke: #d8e9fc;
	stroke-width: 1.4;
}

.mr-ad {
	margin-left: 13px;
	color: #fff;
	font-size: 18px;
	font-family: 'Liberation Sans', sans-serif;
}

.mr-vip {
	margin-left: 4px;
}

.vip-v {
	font: bold 13px 'Liberation Sans', sans-serif;
	fill: #fff;
}

.mr-caret {
	margin-left: 5px;
}

.mr-shirt {
	margin-left: 11px;
}

.mr-caret2 {
	margin-left: 6px;
}

.mr-grid {
	margin-left: 14px;
}

.mr-up {
	margin-left: 21px;
}

/* ribbon */

.ribbon {
	height: 127px;
	flex: none;
	box-sizing: border-box;
	display: flex;
	align-items: flex-start;
	padding-top: 14px;
	background: #f5f5f5;
	border-bottom: 1px solid #d4d4d4;
}

.rb-sep {
	width: 1px;
	height: 86px;
	flex: none;
	margin-top: 7px;
	background: #d2d2d2;
}

.rb-clip {
	width: 124px;
	flex: none;
	box-sizing: border-box;
	padding: 7px 0 0 25px;
	display: grid;
	grid-template-columns: 56px 40px;
	grid-template-rows: 24px 24px;
	row-gap: 30px;
}

.rb-icon {
	display: flex;
	align-items: center;
	gap: 9px;
}

.rb-brush {
	padding-left: 4px;
}

.rb-font {
	width: 601px;
	flex: none;
	box-sizing: border-box;
	padding: 6px 0 0 23px;
}

.font-row {
	height: 37px;
	display: flex;
	align-items: center;
}

.font-row2 {
	height: 30px;
	margin-top: 15px;
	margin-left: -15px;
	padding-right: 10px;
}

.sel {
	height: 37px;
	box-sizing: border-box;
	display: flex;
	align-items: center;
	padding: 0 7px 0 12px;
	background: #eee;
	border: 1px solid #ddd;
	border-radius: 2px;
	color: #888;
}

.sel-font {
	width: 293px;
}

.sel-size {
	width: 93px;
	margin-left: 11px;
	padding: 0 2px 0 13px;
}

.fmt {
	font-family: 'Liberation Sans', sans-serif;
	color: #888;
	font-size: 26px;
	line-height: 30px;
	text-align: center;
	width: 52px;
	flex: none;
}

.fmt sup,
.fmt sub {
	font-size: 11px;
	line-height: 0;
}

.fmt sub {
	vertical-align: -3px;
}

.fmt-grow {
	font-size: 30px;
	margin-left: 17px;
	width: 44px;
}

.fmt-grow sup,
.fmt-shrink sup {
	font-size: 15px;
	font-weight: bold;
	margin-left: -2px;
	vertical-align: 8px;
}

.fmt-shrink {
	font-size: 30px;
	margin-left: 10px;
	width: 44px;
}

.fmt-align {
	margin-left: 16px;
}

.fmt-align-caret {
	margin-left: 9px;
}

.fmt-b {
	font-weight: bold;
}

.fmt-i {
	font-style: italic;
	font-weight: bold;
}

.fmt-u {
	text-decoration: underline;
	font-size: 22px;
}

.fmt-s {
	text-decoration: line-through;
}

.fmt-x {
	font-size: 28px;
}

.fmt-drops {
	flex: 1;
	display: flex;
	justify-content: space-between;
	padding-left: 14px;
}

.drop {
	display: flex;
	align-items: center;
	gap: 7px;
}

.fmt-ab {
	font: 24px 'Liberation Sans', sans-serif;
	color: #aaa;
}

.fmt-a {
	font: 26px 'Liberation Sans', sans-serif;
	color: #aaa;
}

.rb-bigs {
	flex: none;
	display: flex;
	box-sizing: border-box;
}

.rb-draw {
	width: 324px;
	padding-left: 9px;
}

.rb-arrange {
	width: 400px;
	padding-left: 11px;
}

.big {
	width: 75px;
	height: 91px;
	flex: none;
	display: flex;
	flex-direction: column;
	align-items: center;
	border-radius: 3px;
	overflow: hidden;
}

.big-ic {
	height: 44px;
	align-self: stretch;
	flex: none;
	display: flex;
	align-items: center;
	justify-content: center;
	padding-bottom: 2px;
	box-sizing: border-box;
}

.big-ic-up {
	padding-bottom: 6px;
}

.big-lb {
	margin-top: 3px;
	line-height: 24px;
	height: 24px;
}

.big .caret {
	margin-top: 7px;
}

.big-on {
	background: #efefef;
}

.big-on .big-ic {
	background: #e0e0e0;
}

.big-off .big-lb {
	color: #c4c4c4;
}

.big-narrow {
	width: 64px;
}

.big-narrow .caret {
	margin-top: 12px;
}

/* symbol library */

.workspace {
	flex: 1;
	display: flex;
	min-height: 0;
}

.lib {
	width: 309px;
	flex: none;
	display: flex;
	flex-direction: column;
	box-sizing: border-box;
	border-right: 1px solid #d8d8d8;
	background: #f5f5f5;
}

.lib-head {
	height: 44px;
	flex: none;
	display: flex;
	align-items: center;
	justify-content: space-between;
	padding: 0 15px 8px 7px;
	font-size: 20px;
	color: #333;
	box-sizing: border-box;
}

.lib-search {
	height: 41px;
	flex: none;
	display: flex;
	align-items: center;
	padding-left: 17px;
	margin-bottom: 14px;
}

.lib-search .caret {
	margin-left: 4px;
}

.search-box {
	width: 209px;
	height: 41px;
	margin-left: 4px;
	box-sizing: border-box;
	display: flex;
	align-items: center;
	justify-content: space-between;
	padding: 0 10px 0 9px;
	border: 1px solid #e2e2e2;
	border-radius: 2px;
	color: #999;
}

.updown {
	margin-left: 7px;
	display: flex;
	flex-direction: column;
	gap: 7px;
}

.updown span {
	width: 30px;
	height: 17px;
	box-sizing: border-box;
	display: flex;
	align-items: center;
	justify-content: center;
	border: 1px solid #e2e2e2;
	border-radius: 2px;
}

.lib-body {
	flex: 1;
	min-height: 0;
	display: flex;
}

.lib-list {
	width: 300px;
	flex: none;
	overflow: hidden;
}

.lib-section {
	height: 52px;
	box-sizing: border-box;
	display: flex;
	align-items: center;
	padding: 0 11px 0 16px;
	background: #e0e0e0;
	color: #222;
}

.caret-section {
	border-left-width: 6px;
	border-right-width: 6px;
	border-top: 8px solid #777;
}

.lib-section span {
	margin-left: 9px;
	margin-right: auto;
}

.shapes {
	margin-top: 4px;
	display: grid;
	grid-template-columns: repeat(4, 73px);
	grid-auto-rows: 73px;
}

.shapes svg {
	width: 73px;
	height: 73px;
	fill: #fff;
	stroke: #777;
	stroke-width: 1.3;
	stroke-linejoin: round;
}

.shapes .no-fill {
	fill: none;
}

.shape-yes {
	font: 14px 'Liberation Sans', sans-serif;
	fill: #777;
	stroke: none;
}

.shape-note {
	font: 5.5px 'Liberation Sans', sans-serif;
	fill: #999;
	stroke: none;
}

.vbar {
	flex: 1;
	background: #eee;
}

.vbar-thumb {
	background: #d8d8d8;
	border-radius: 4px;
}

.lib-thumb {
	height: 108px;
}

/* editor */

.editor {
	width: 1137px;
	flex: none;
	display: flex;
	flex-direction: column;
}

.doc-tabs {
	height: 37px;
	flex: none;
	box-sizing: border-box;
	background: #f5f5f5;
	border-bottom: 1px solid #dcdcdc;
}

.doc-tab {
	width: 240px;
	height: 36px;
	box-sizing: border-box;
	display: flex;
	align-items: center;
	padding-left: 18px;
	background: #c2c2c2;
	color: #1e88f5;
}

.doc-tab span {
	margin-left: 13px;
}

.doc-x {
	margin-left: auto;
	margin-right: 27px;
}

.ruler-row {
	height: 26px;
	flex: none;
	display: flex;
	box-sizing: border-box;
	border-bottom: 1px solid #dcdcdc;
}

.ruler-corner {
	width: 27px;
	flex: none;
	background: #e8e8e8;
}

.ruler-top {
	width: 1097px;
	flex: none;
	display: flex;
	box-sizing: border-box;
	padding-left: 9px;
	overflow: hidden;
	background: #fafafa;
}

.rt-cell {
	width: 64.65px;
	flex: none;
	box-sizing: border-box;
	padding-left: 1px;
	border-left: 1px solid #ccc;
	font: 14px/19px 'Liberation Sans', sans-serif;
	color: #777;
	background: repeating-linear-gradient(to right, transparent 0, transparent 15.2px, #ccc 15.2px, #ccc 16.17px) left bottom / 100% 13px no-repeat;
}

.view {
	flex: 1;
	min-height: 0;
	display: flex;
}

.ruler-left {
	width: 27px;
	flex: none;
	box-sizing: border-box;
	padding-top: 7px;
	overflow: hidden;
	background: #fafafa;
	border-right: 1px solid #dcdcdc;
}

.rl-cell {
	height: 64.7px;
	box-sizing: border-box;
	border-top: 1px solid #ccc;
	padding: 2px 0 0 2px;
	background: repeating-linear-gradient(to bottom, transparent 0, transparent 15.2px, #ccc 15.2px, #ccc 16.17px) right top / 14px 100% no-repeat;
}

.rl-cell span {
	display: block;
	writing-mode: vertical-rl;
	transform: rotate(180deg);
	font: 14px/16px 'Liberation Sans', sans-serif;
	color: #777;
}

.stage {
	width: 1097px;
	flex: none;
	position: relative;
	overflow: hidden;
	background: #e4e4e4;
}

.vscroll {
	flex: 1;
	padding: 93px 2px 0 1px;
	background: #f5f5f5;
	box-sizing: border-box;
}

.vscroll-thumb {
	height: 435px;
	background: #bdbdbd;
	border-radius: 5px;
}

.hscroll {
	height: 12px;
	flex: none;
	box-sizing: border-box;
	padding: 1px 0 1px 247px;
	background: #f5f5f5;
	border-top: 1px solid #e0e0e0;
}

.hscroll-thumb {
	width: 648px;
	height: 100%;
	background: #bdbdbd;
	border-radius: 5px;
}

.colorbar {
	height: 24px;
	flex: none;
	display: flex;
	box-sizing: border-box;
	border-top: 1px solid #dcdcdc;
	background: #f5f5f5;
}

.colorbar-ic {
	width: 47px;
	flex: none;
	display: flex;
	align-items: center;
	justify-content: center;
}

.swatches {
	flex: 1;
	display: flex;
	gap: 1px;
	padding: 0 1px 2px 0;
}

.swatches i {
	flex: 1;
	display: block;
}

/* the drawing itself */

.page {
	position: absolute;
	left: 8px;
	top: 72px;
	width: 1007px;
	height: 508px;
	box-sizing: border-box;
	background: #fff;
	border: 1px solid #b0b0b0;
}

.d-title {
	position: absolute;
	left: 32px;
	top: 32px;
	width: 191px;
	height: 38px;
	background: #cfd0d2;
	color: #000;
	font-size: 19.5px;
	text-align: center;
	line-height: 37px;
}

.d-band {
	position: absolute;
	left: 53px;
	top: 178px;
	width: 746px;
	height: 38px;
	background: #d0e4d2;
	color: #000;
	font-weight: bold;
	font-size: 19px;
	text-align: center;
	line-height: 33px;
}

.d-box {
	position: absolute;
	top: 240px;
	height: 234px;
	box-sizing: border-box;
	background: #d0e4d2;
}

.d-box-l {
	left: 53px;
	width: 367px;
	padding-left: 17px;
}

.d-box-r {
	left: 433px;
	width: 366px;
	padding-left: 26px;
}

.d-box-title {
	height: 24px;
	margin-top: 0;
	font-size: 14px;
	font-weight: bold;
	color: #000;
	line-height: 24px;
}

.d-box-l .d-box-title {
	margin-left: -17px;
	text-align: center;
}

.d-box-r .d-box-title {
	margin-left: -26px;
	text-align: center;
}

.cluster {
	display: grid;
	grid-template-columns: 92px 26px 91px 23px 92px;
	grid-template-rows: 55px 14px 54px 19px 55px;
}

.node {
	display: flex;
	align-items: center;
	justify-content: center;
	padding-bottom: 2px;
	box-sizing: border-box;
	background: #e8e8e8;
	border-radius: 6px;
	font-size: 10px;
	letter-spacing: 1px;
	color: #333;
}

.n-top {
	grid-area: 1 / 3;
}

.n-left {
	grid-area: 3 / 1;
}

.n-right {
	grid-area: 3 / 5;
}

.n-bottom {
	grid-area: 5 / 3;
}

.d-links {
	position: absolute;
	left: 0;
	top: 0;
	width: 1004px;
	height: 505px;
}

.d-line {
	fill: none;
	stroke: #3a3a3a;
	stroke-width: 0.8;
}

.d-result {
	position: absolute;
	left: 841px;
	top: 290px;
	width: 132px;
	height: 184px;
	box-sizing: border-box;
	display: flex;
	flex-direction: column;
	align-items: center;
	padding-top: 28px;
	background: #fff;
	border: 1px solid #d0e4d2;
}

.d-result-title {
	font-size: 15px;
	line-height: 20px;
	font-weight: bold;
	letter-spacing: 1.3px;
	color: #000;
}

.d-gap {
	width: 72px;
	height: 48px;
	margin-top: 28px;
	padding-bottom: 2px;
	box-sizing: border-box;
	flex: none;
	display: flex;
	align-items: center;
	justify-content: center;
	border-radius: 50%;
	background: #e8e8e8;
	font-size: 13px;
	letter-spacing: 1px;
	color: #222;
}

.d-list {
	list-style: none;
	margin: 19px 0 0;
	padding: 0;
	font-size: 10px;
	line-height: 13px;
	letter-spacing: 1px;
	color: #333;
}

.d-list li {
	display: flex;
	align-items: center;
	gap: 5px;
}

.d-list li::before {
	content: "";
	width: 3px;
	height: 3px;
	border: 1px solid #333;
	border-radius: 50%;
}

/* icon strip */

.strip {
	width: 51px;
	flex: none;
	box-sizing: border-box;
	border-left: 1px solid #d8d8d8;
	border-right: 1px solid #d0d0d0;
	background: #f5f5f5;
}

.strip-top {
	height: 46px;
	padding-right: 2px;
	display: flex;
	align-items: center;
	justify-content: center;
}

.strip-list {
	display: flex;
	flex-direction: column;
	gap: 15px;
}

.strip-list span {
	height: 51px;
	padding-right: 1px;
	display: flex;
	align-items: center;
	justify-content: center;
}

.strip-on {
	background: #0a84ff;
	color: #fff;
}

/* theme panel */

.panel {
	flex: 1;
	display: flex;
	flex-direction: column;
	min-width: 0;
	background: #f5f5f5;
}

.panel-head {
	height: 47px;
	flex: none;
	background: #e0e0e0;
	text-align: center;
	line-height: 47px;
	font-size: 20px;
	font-weight: bold;
	color: #222;
	padding-right: 1px;
}

.panel-body {
	flex: 1;
	min-height: 0;
	display: flex;
}

.panel-main {
	width: 415px;
	flex: none;
	box-sizing: border-box;
	padding: 23px 0 0 22px;
	overflow: hidden;
}

.theme-top {
	height: 191px;
	display: flex;
}

.preview {
	width: 195px;
	height: 191px;
	flex: none;
	box-sizing: border-box;
	background: #fff;
	border: 1px solid #ddd;
}

.pv-text {
	font: 19px 'DejaVu Sans Mono', monospace;
	fill: #6a80b8;
}

.pv-text-big {
	font: 21.500px 'DejaVu Sans Mono', monospace;
	fill: #1e2a3e;
}

.opts {
	list-style: none;
	margin: 0 0 0 45px;
	padding: 0;
}

.opts li {
	height: 48.500px;
	display: flex;
	align-items: center;
	gap: 17px;
	color: #222;
}

.opts li svg,
.aa {
	width: 32px;
	flex: none;
}

.aa {
	display: block;
	font: 400 30px/30px 'Roboto', sans-serif;
	color: #444;
	text-align: center;
}

.subtabs {
	display: flex;
	margin-top: 24px;
}

.subtab {
	width: 94px;
	height: 90px;
	display: flex;
	flex-direction: column;
	align-items: center;
	justify-content: space-between;
	box-sizing: border-box;
	padding: 8px 0 12px;
	color: #222;
}

.subtab svg,
.subtab .aa {
	height: 30px;
}

.subtab-on {
	background: #e0e0e0;
}

.cards {
	margin-top: 29px;
	display: grid;
	grid-template-columns: 179px 179px;
	grid-auto-rows: 146px;
	gap: 8px;
}

.card {
	background: #fff;
	box-shadow: inset 0 0 0 1px #ddd;
}

.card svg {
	width: 179px;
	height: 146px;
}

.s-dia {
	fill: var(--dia-fill);
	stroke: var(--dia-line);
	stroke-width: var(--weight);
	stroke-linejoin: round;
}

.s-line {
	fill: none;
	stroke: var(--arrow);
	stroke-width: var(--weight);
}

.s-head {
	fill: var(--arrow);
	stroke: var(--arrow);
	stroke-linejoin: round;
}

.s-box {
	fill: var(--box-fill);
	stroke: var(--box-line);
	stroke-width: var(--box-weight, var(--weight));
}

.s-para {
	fill: var(--para-fill);
	stroke: var(--para-line);
	stroke-width: var(--weight);
	stroke-linejoin: round;
}

.s-conn {
	fill: none;
	stroke: var(--conn);
	stroke-width: var(--conn-weight, var(--weight));
}

.s-chead {
	fill: var(--conn-head);
	stroke: var(--conn-head);
	stroke-linejoin: round;
}

.th-1 {
	--weight: 1px;
	--box-weight: 1.500px;
	--conn-weight: 1.500px;
	--dia-fill: #fff;
	--dia-line: #1c5a78;
	--arrow: #0e4a62;
	--box-fill: #fff;
	--box-line: #888;
	--para-fill: #fff;
	--para-line: #7c6a3e;
	--conn: #888;
	--conn-head: #444;
}

.th-2 {
	--weight: 1px;
	--conn-weight: 1.500px;
	--dia-fill: #6b84a5;
	--dia-line: #6b84a5;
	--arrow: #3f5a78;
	--box-fill: #86acbd;
	--box-line: #a9c6d2;
	--para-fill: #dbbb87;
	--para-line: #dbbb87;
	--conn: #9bb6c4;
	--conn-head: #5a7f95;
}

.th-3 {
	--weight: 2.500px;
	--dia-fill: #f1eefa;
	--dia-line: #9189d0;
	--arrow: #6d66a4;
	--box-fill: #ecf0fa;
	--box-line: #6680c4;
	--para-fill: #ecf2f9;
	--para-line: #7fa6cf;
	--conn: #4f6499;
	--conn-head: #4f6499;
}

.th-4 {
	--weight: 1px;
	--conn-weight: 1.200px;
	--dia-fill: #9ecbba;
	--dia-line: #7fa597;
	--arrow: #6b8a7c;
	--box-fill: #99b699;
	--box-line: #85a187;
	--para-fill: #a8cbd4;
	--para-line: #7f9fa9;
	--conn: #a4baa8;
	--conn-head: #6b8a7c;
}

.th-5 {
	--weight: 2.500px;
	--dia-fill: #fff;
	--dia-line: #4f79b8;
	--arrow: #4f79b8;
	--box-fill: #fff;
	--box-line: #4f79b8;
	--para-fill: #f4dde2;
	--para-line: #c68a9a;
	--conn: #4f79b8;
	--conn-head: #4f79b8;
}

.th-6 {
	--weight: 1px;
	--dia-fill: #2699d0;
	--dia-line: #2699d0;
	--arrow: #2699d0;
	--box-fill: #2699d0;
	--box-line: #2699d0;
	--para-fill: #e9a02e;
	--para-line: #e9a02e;
	--conn: #2699d0;
	--conn-head: #2699d0;
}

.panel-thumb {
	height: 320px;
}

/* status bar */

.statusbar {
	height: 47px;
	flex: none;
	box-sizing: border-box;
	display: flex;
	align-items: center;
	border-top: 1px solid #dcdcdc;
	background: #f4f4f4;
}

.st-pages {
	width: 254px;
	height: 36px;
	flex: none;
	box-sizing: border-box;
	display: flex;
	align-items: center;
	padding: 0 3px 0 26px;
	border-right: 1px solid #dcdcdc;
}

.st-page {
	margin-left: 35px;
	color: #222;
}

.st-active {
	margin-left: 41px;
	font-weight: bold;
	color: #111;
}

.st-add {
	margin-left: 52px;
}

.st-right {
	margin-left: auto;
	display: flex;
	align-items: center;
	padding-right: 43px;
}

.st-minus {
	margin-left: 17px;
}

.slider {
	width: 123px;
	height: 7px;
	margin-left: 11px;
	position: relative;
	border-radius: 4px;
	background: #ddd;
}

.slider-fill {
	width: 22px;
	height: 7px;
	border-radius: 4px 0 0 4px;
	background: #bdbdbd;
}

.slider-thumb {
	position: absolute;
	left: 14px;
	top: -5px;
	width: 11px;
	height: 11px;
	border: 3px solid #bdbdbd;
	border-radius: 50%;
	background: #fff;
}

.st-plus {
	margin-left: 10px;
}

.st-zoom {
	margin-left: 22px;
	width: 38px;
	font-size: 19px;
	color: #111;
}

.caret-zoom {
	margin-left: 14px;
	border-top-color: #888;
}

.st-full {
	margin-left: 27px;
}

.st-fit {
	margin-left: 13px;
}
```
